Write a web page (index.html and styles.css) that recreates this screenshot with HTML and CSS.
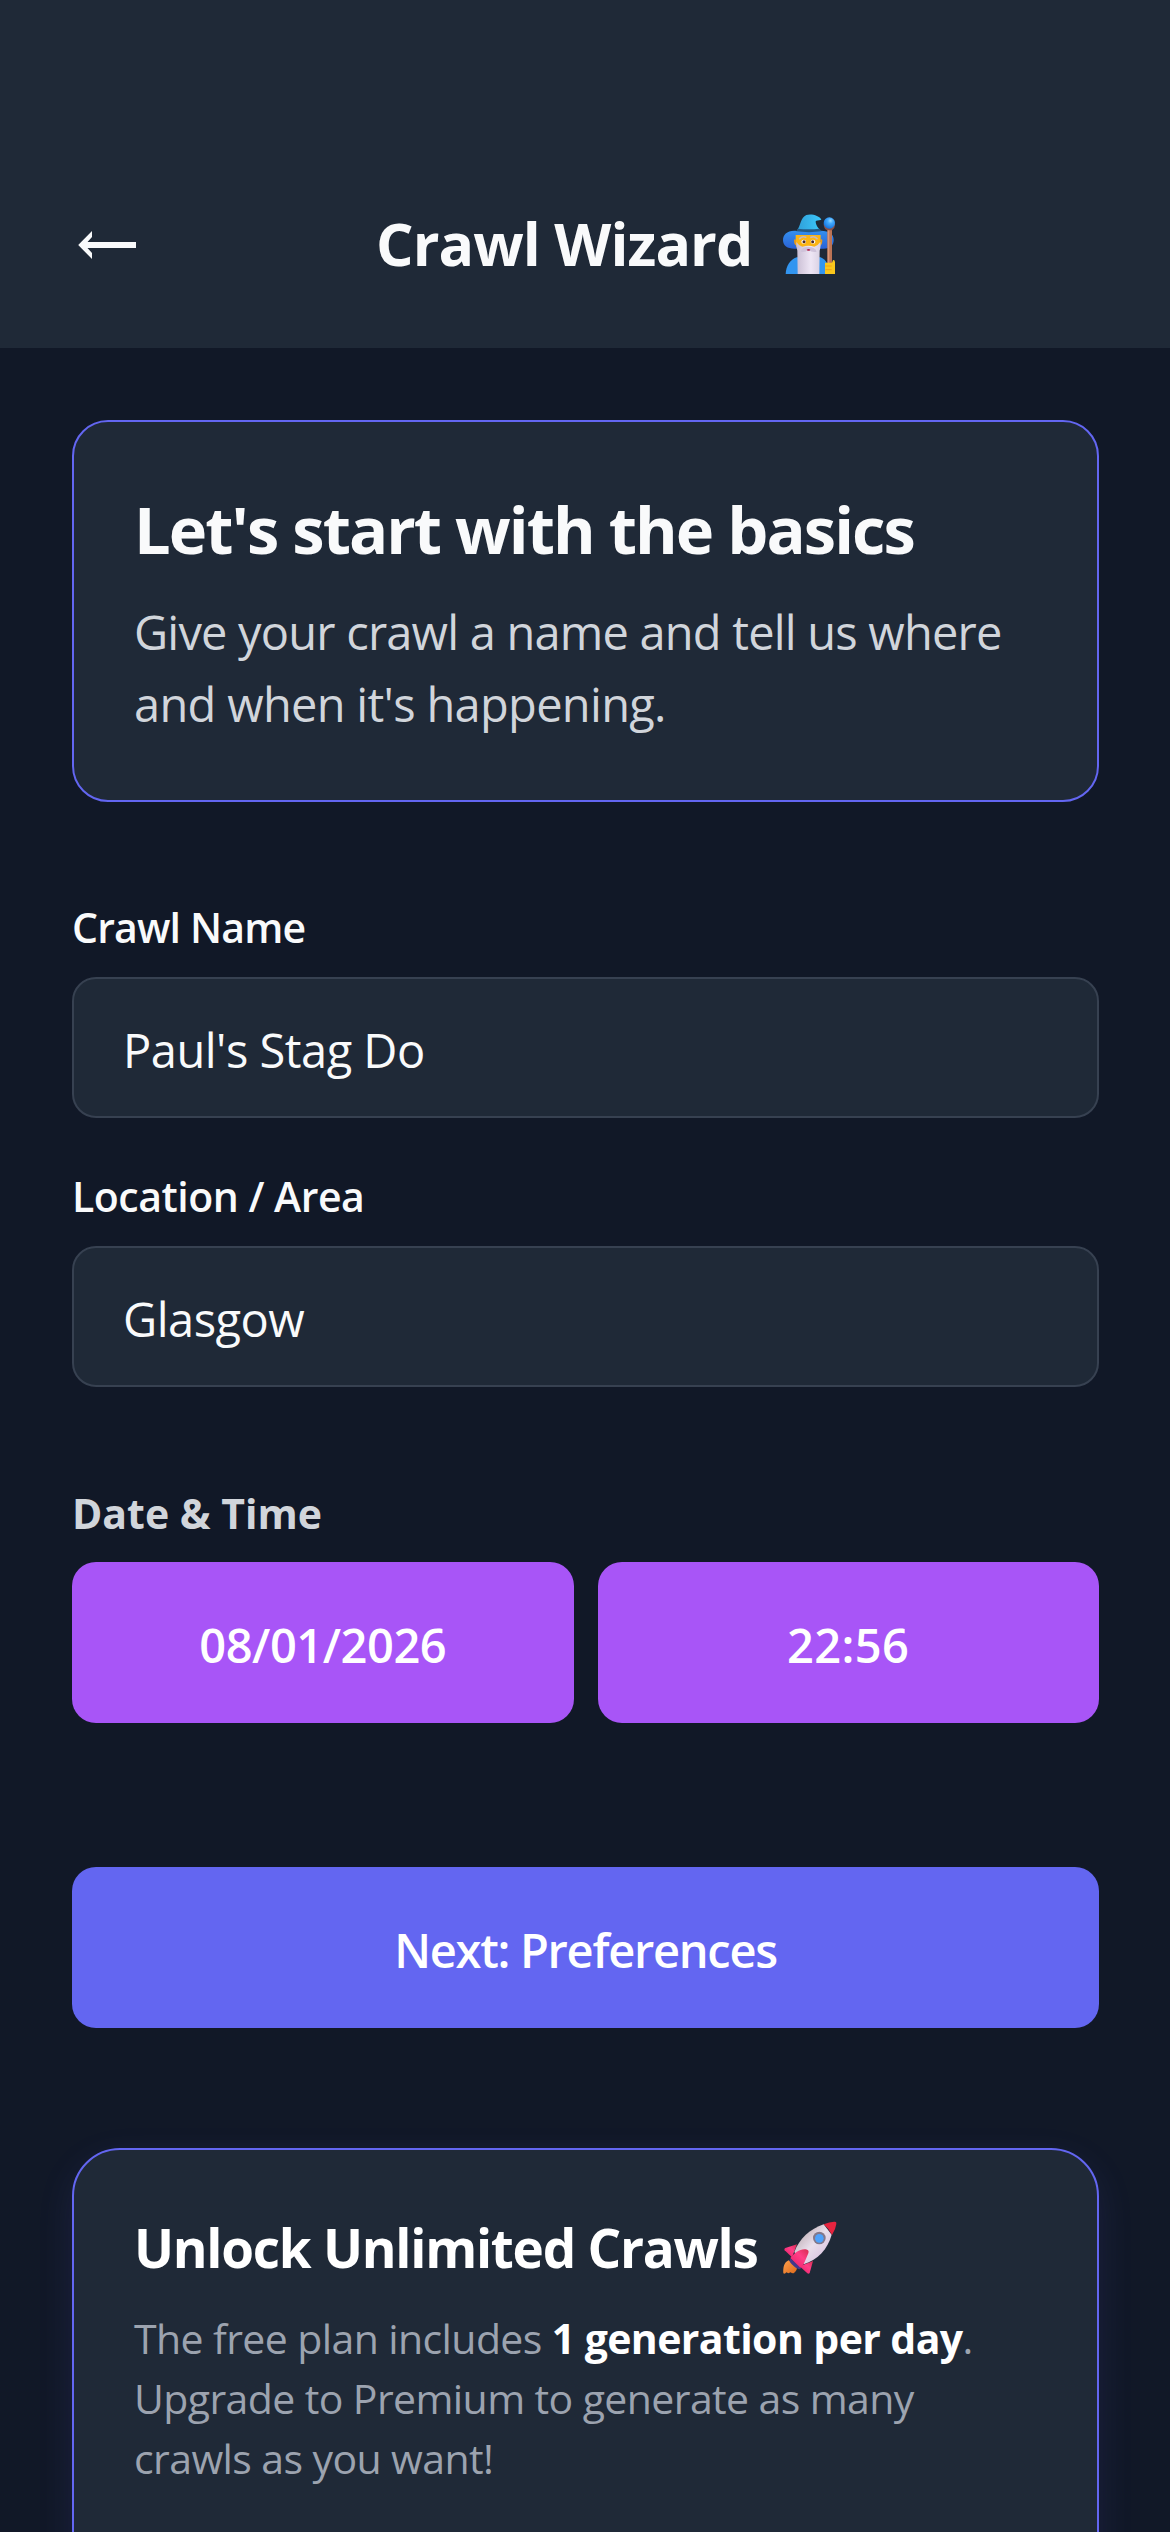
FILE: index.html
```html
<!DOCTYPE html>
<html lang="en">
<head>
<meta charset="utf-8">
<title>Crawl Wizard</title>
<link rel="stylesheet" href="styles.css">
</head>
<body>
<header class="topbar">
  <button class="back" aria-label="Back">
    <svg width="60" height="30" viewBox="0 0 60 30"><path d="M14 1v6L9.500 12H58v6H9.500L14 23v6L.2 15z" fill="#f9fafb"/></svg>
  </button>
  <h1 class="title"><span class="title-text">Crawl Wizard</span>
    <svg class="wizard" width="52" height="60" viewBox="39 28 156 180">
      <defs>
        <linearGradient id="hat" x1="0" y1="0" x2="1" y2="0"><stop offset="0" stop-color="#2f9ed8"/><stop offset="1" stop-color="#3cc8fb"/></linearGradient>
        <linearGradient id="brim" x1="0" y1="0" x2="0" y2="1"><stop offset="0" stop-color="#3490ee"/><stop offset="1" stop-color="#2a62d6"/></linearGradient>
        <linearGradient id="beard" x1="0" y1="0" x2="1" y2="0"><stop offset="0" stop-color="#c9bdd3"/><stop offset=".6" stop-color="#eee6f5"/><stop offset="1" stop-color="#d9d0e2"/></linearGradient>
        <radialGradient id="orb" cx=".6" cy=".3" r=".7"><stop offset="0" stop-color="#9adcff"/><stop offset=".35" stop-color="#42aaff"/><stop offset="1" stop-color="#1673dc"/></radialGradient>
      </defs>
      <path d="M47 208C48 184 60 165 80 158h72c19 8 24 24 24 50z" fill="#3295f0"/>
      <path d="M80 79C52 76 39 91 39 106c0 17 13 26 34 26h88c20 0 30-11 30-27 0-17-14-28-42-27z" fill="url(#brim)"/>
      <path d="M77 91h75v24c0 20-16 30-37 30s-38-10-38-30z" fill="#fbb414"/>
      <path d="M72 105q4-3 6 2v15q-6-2-6-17M157 105q-4-3-6 2v15q6-2 6-17" fill="#e99b19"/>
      <path d="M79 112q8 12 18 14 18-6 36 0 10-2 18-14 2 14-2 26l-1 70H83l-1-70q-4-12-3-26z" fill="url(#beard)"/>
      <path d="M92 141q2-14 23-14t25 14q-14 3-25-6-10 9-23 6" fill="#cfc3da"/>
      <path d="M110 135q6-4 11 0-5 7-11 0" fill="#b31645"/>
      <ellipse cx="101" cy="111" rx="7" ry="6" fill="#fff"/><ellipse cx="129" cy="111" rx="7" ry="6" fill="#fff"/>
      <circle cx="102" cy="111" r="4.500" fill="#4b292b"/><circle cx="128" cy="111" r="4.500" fill="#4b292b"/>
      <path d="M89 102q8-9 18-4M123 98q10-5 18 4" fill="none" stroke="#c8b9ba" stroke-width="5" stroke-linecap="round"/>
      <path d="M81 78C91 65 92 38 109 31c13-5 40 1 45 14-10 3-15 1-17 5 0 12 8 20 14 28z" fill="url(#hat)"/>
      <path d="M83 72q32 4 66 0l5 8q-37 5-75 0z" fill="#245a86"/>
      <path d="M172 68h14v112h-14z" fill="#bb7355"/><path d="M173 73h5v104h-5z" fill="#d89678"/>
      <path d="M161 57q0 16 11 20h14q10-6 9-20z" fill="#8e5146"/>
      <circle cx="178" cy="55" r="17" fill="url(#orb)"/>
      <path d="M165 174h21l3-8q6-1 6 7v35h-30z" fill="#fac71c"/><path d="M166 184h19M166 195h19" stroke="#f29e16" stroke-width="3"/>
    </svg>
  </h1>
</header>
<main class="content">
  <section class="intro">
    <h2 class="intro-title">Let's start with the basics</h2>
    <p class="intro-copy"><span class="line-where">Give your crawl a name and tell us where</span> <span class="line-when">and when it's happening.</span></p>
  </section>
  <label class="field first"><span class="label name-label">Crawl Name</span><input class="input name-input" value="Paul's Stag Do"></label>
  <label class="field"><span class="label place-label">Location / Area</span><input class="input place-input" value="Glasgow"></label>
  <section class="when">
    <h3 class="when-title">Date &amp; Time</h3>
    <div class="when-row">
      <button class="btn pick date">08/01/2026</button>
      <button class="btn pick time">22:56</button>
    </div>
  </section>
  <button class="btn next">Next: Preferences</button>
  <section class="premium">
    <h2 class="premium-title"><span class="premium-text">Unlock Unlimited Crawls</span>
      <svg class="rocket" width="54" height="54" viewBox="38 52 162 162">
        <defs>
          <linearGradient id="hull" x1="0" y1="0" x2="1" y2="1"><stop offset=".2" stop-color="#c3b4bb"/><stop offset=".5" stop-color="#e9dfeb"/><stop offset=".85" stop-color="#d9c2df"/></linearGradient>
          <linearGradient id="fin" x1="0" y1="1" x2="1" y2="0"><stop offset="0" stop-color="#e91c68"/><stop offset=".6" stop-color="#ff3f86"/><stop offset="1" stop-color="#d52d4f"/></linearGradient>
          <linearGradient id="flame" x1="0" y1="0" x2="1" y2="1"><stop offset="0" stop-color="#ffa04c"/><stop offset="1" stop-color="#dd691b"/></linearGradient>
        </defs>
        <path d="M55 170C41 177 38 190 39 209c4 2 6 1 9-3l6 3 7-3c3 3 7 4 10 2 7-6 10-11 8-18z" fill="url(#flame)"/>
        <path d="M60 164l33 29-5 4c-10-2-25-14-31-26z" fill="#40398b"/>
        <path d="M80 122L45 133q-5 2-2 7l22 21z" fill="url(#fin)"/>
        <path d="M128 172L118 208q-3 4-7 1L88 188z" fill="url(#fin)"/>
        <path d="M160 62C119 76 87 105 72 145l28 37c43-15 72-45 84-89z" fill="url(#hull)"/>
        <path d="M160 62q20-9 34-8 5 0 4 7-2 16-13 33-8-18-25-32" fill="#e6243f"/>
        <path d="M60 163C73 147 89 135 106 137c7 1 11 5 8 12l-14 33-10 10z" fill="url(#fin)"/>
        <circle cx="147" cy="103" r="19" fill="#82788b"/><circle cx="147" cy="104" r="13" fill="#4ea2fb"/>
      </svg>
    </h2>
    <p class="premium-copy">The free plan includes <strong>1 generation per day</strong>.<br>Upgrade to Premium to generate as many<br>crawls as you want!</p>
  </section>
</main>
</body>
</html>
```
FILE: styles.css
```css
* { box-sizing: border-box; }
html { height: 100%; overflow: hidden; }
body {
  display: flex;
  flex-direction: column;
  margin: 0;
  height: 2532px;
  overflow: hidden;
  background: #111827;
  color: #f9fafb;
  font-family: "Open Sans", "Noto Sans", sans-serif;
}
h1, h2, h3, p { margin: 0; font-weight: 700; }
button { border: 0; margin: 0; font: inherit; color: #fff; }
svg { display: block; flex: none; }
.topbar {
  display: grid;
  flex: none;
  grid-template-columns: 298px 1fr 300px;
  height: 348px;
  padding: 203px 0 0 78px;
  background: #1f2937;
}
.back { display: flex; align-items: center; height: 84px; padding: 0; background: none; }
.title { display: flex; font-size: 59px; line-height: 81px; letter-spacing: -.92px; }
.title-text { white-space: nowrap; width: 407px; }
.wizard { margin-top: 11px; }
.content {
  display: flex;
  flex: none;
  flex-direction: column;
  height: 2184px;
  padding: 72px 71px 0 72px;
  overflow: hidden;
}
.content > * { flex: none; }
.intro {
  height: 382px;
  padding: 63px 60px 0;
  border: 2px solid #6366f1;
  border-radius: 36px;
  background: #1f2937;
}
.intro-title { font-size: 65px; line-height: 88px; letter-spacing: -1.93px; white-space: nowrap; }
.intro-copy {
  display: flex;
  flex-direction: column;
  margin-top: 23px;
  font-size: 47px;
  font-weight: 400;
  line-height: 72px;
  color: #d1d5db;
  white-space: nowrap;
}
.line-where { letter-spacing: -.8px; }
.line-when { letter-spacing: -.69px; }
.field { display: flex; flex-direction: column; gap: 22px; margin-top: 50px; }
.first { margin-top: 97px; }
.label { font-size: 41px; font-weight: 600; line-height: 56px; }
.name-label { letter-spacing: -.83px; }
.place-label { letter-spacing: -.49px; }
.input {
  height: 141px;
  padding: 5px 49px 0;
  border: 2px solid #374151;
  border-radius: 24px;
  background: #1f2937;
  color: #f9fafb;
  font: 400 47px "Open Sans", "Noto Sans", sans-serif;
  letter-spacing: -.5px;
}
.when { margin-top: 98px; }
.when-title { font-size: 41px; line-height: 56px; color: #d1d5db; }
.when-row { display: grid; grid-template-columns: 1fr 1fr; gap: 24px; margin-top: 21px; }
.btn {
  height: 161px;
  padding: 5px 0 0;
  border-radius: 24px;
  font-size: 47px;
  font-weight: 600;
  line-height: 68px;
}
.pick { background: #a855f7; }
.date { letter-spacing: -.48px; }
.time { letter-spacing: .38px; }
.next { margin-top: 144px; background: #6366f1; letter-spacing: -1.28px; }
.premium {
  height: 620px;
  margin-top: 120px;
  padding: 62px 60px 0;
  border: 2px solid #6366f1;
  border-radius: 48px;
  background: #1f2937;
  box-shadow: 0 12px 36px rgba(99, 102, 241, .12);
}
.premium-title { display: flex; font-size: 53px; line-height: 72px; letter-spacing: -1.26px; color: #fff; }
.premium-text { width: 649px; white-space: nowrap; }
.rocket { margin-top: 9px; }
.premium-copy {
  margin-top: 24px;
  font-size: 41px;
  font-weight: 400;
  line-height: 60px;
  letter-spacing: -.6px;
  color: #9ca3af;
  white-space: nowrap;
}
.premium-copy strong { color: #fff; }
```
